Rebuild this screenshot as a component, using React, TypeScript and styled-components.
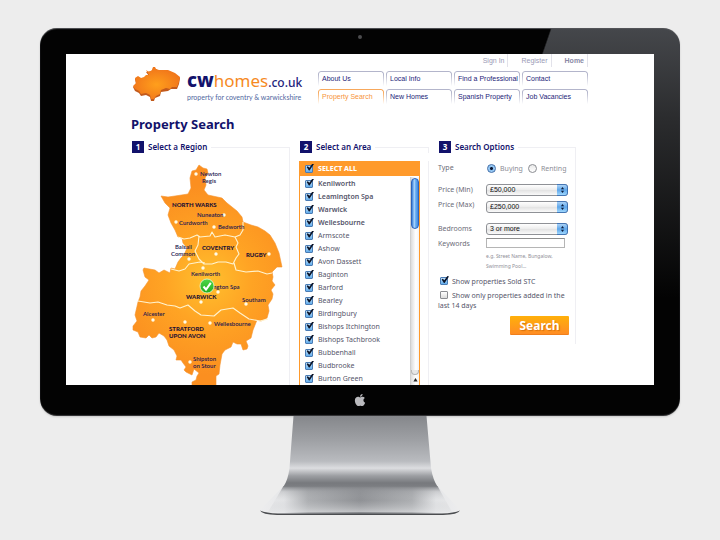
import React from 'react';
import styled, { createGlobalStyle } from 'styled-components';
import { FaApple } from 'react-icons/fa';

const lucida = `"Noto Sans", "Open Sans", sans-serif`;
const arial = `"Liberation Sans", Arial, sans-serif`;
const navy = '#12126b';
const orange = '#ff9a2b';

const GlobalStyle = createGlobalStyle`
  *, *::before, *::after { box-sizing: border-box; }
  body { margin: 0; background: #ededed; font-family: ${lucida}; }
  h1, h2, ul, p { margin: 0; padding: 0; }
  ul { list-style: none; }
`;

/* ---------- hardware ---------- */

const Stage = styled.main`
  min-height: 100vh;
  padding: 28px 40px 0;
  overflow: hidden;
  display: flex;
  flex-direction: column;
  align-items: center;
`;

const Monitor = styled.div`
  width: 100%;
  padding: 0 26px;
  border-radius: 17px;
  background:
    linear-gradient(109deg, #030303 66%, transparent 66.2%),
    linear-gradient(#45474b 0, #2b2c2e 90px, #030303 270px);
  box-shadow: inset 0 1px 1px #55565a, inset 0 -1px 1px #3a3a3c, 0 1px 2px rgba(0, 0, 0, 0.15);
`;

const TopBezel = styled.div`
  height: 26px;
  display: flex;
  justify-content: center;
  padding-top: 7px;
`;

const Camera = styled.span`
  width: 4px;
  height: 4px;
  border-radius: 50%;
  background: #4c4c4e;
`;

const Chin = styled.div`
  height: 31px;
  display: flex;
  justify-content: center;
  padding-top: 8px;
  color: #b9b9bd;
  font-size: 14px;
`;

const Screen = styled.div`
  aspect-ratio: 588 / 331;
  overflow: hidden;
  background: #fff;
`;

const StandArt = styled.svg`
  display: block;
  width: 204px;
  height: 104px;
`;

/* ---------- page ---------- */

const Site = styled.div`
  max-width: 458px;
  margin: 0 auto;
`;

const Header = styled.header`
  display: flex;
  justify-content: space-between;
  padding-right: 1px;
`;

const Brand = styled.a`
  display: flex;
  align-items: flex-start;
  padding: 12px 0 0 1px;
  text-decoration: none;
`;

const LogoArt = styled.svg`
  width: 50px;
  height: 36px;
  margin-right: 5px;
`;

const BrandText = styled.span`
  display: flex;
  flex-direction: column;
  padding-top: 4px;
`;

const Wordmark = styled.span`
  font: 400 19px/20px ${lucida};
  white-space: nowrap;
  color: #f68a1f;
`;

const Bold = styled.b`
  font-weight: 800;
  color: ${navy};
`;

const Homes = styled.span`
  font-size: 17px;
`;

const Suffix = styled.span`
  font-size: 12px;
  font-weight: 500;
  color: #24247c;
`;

const Tagline = styled.span`
  font: 400 7px/8px Lato, sans-serif;
  white-space: nowrap;
  color: #4f66a0;
`;

const HeaderNav = styled.div`
  width: 270px;
`;

const TopLinks = styled.nav`
  display: flex;
  justify-content: flex-end;
  height: 13px;
`;

const TopLink = styled.a<{ $strong?: boolean }>`
  padding: 3px 3px 0 13px;
  border-right: 1px solid #e2e2ea;
  font: ${p => (p.$strong ? 700 : 400)} 7px/8px ${arial};
  color: ${p => (p.$strong ? '#8a8aa6' : '#9a9ab6')};
  text-decoration: none;
`;

const Tabs = styled.nav`
  display: grid;
  grid-template-columns: repeat(4, minmax(0, 1fr));
  gap: 2px;
  margin-top: 4px;
`;

const Tab = styled.a<{ $active?: boolean }>`
  position: relative;
  height: 16px;
  padding-left: 4px;
  font: 400 7px/16px ${arial};
  white-space: nowrap;
  text-decoration: none;
  color: ${p => (p.$active ? '#f7953a' : '#1c1c78')};
  &::before {
    content: '';
    position: absolute;
    inset: 0;
    border: 1px solid ${p => (p.$active ? '#f7a85c' : '#b3b5cb')};
    border-bottom: 0;
    border-radius: 3px 3px 0 0;
    mask-image: linear-gradient(#000 20%, transparent 95%);
  }
`;

const Title = styled.h1`
  margin-top: 10px;
  font: 700 13px/18px ${lucida};
  color: ${navy};
`;

const Columns = styled.div`
  display: grid;
  grid-template-columns: minmax(0, 159fr) minmax(0, 130fr) minmax(0, 138fr);
  column-gap: 9px;
  align-items: start;
  margin-top: 8px;
  padding-right: 13px;
`;

const ColumnHead = styled.div`
  display: flex;
  align-items: center;
  height: 12px;
  padding-left: 1px;
  &::after {
    content: '';
    flex: 1;
    align-self: flex-end;
    height: 6px;
    margin-left: 4px;
    border: solid #efeff3;
    border-width: 1px 1px 0 0;
  }
`;

const Step = styled.span`
  width: 12px;
  height: 12px;
  margin-right: 4px;
  background: ${navy};
  color: #fff;
  font: 700 8px/12px ${lucida};
  text-align: center;
`;

const ColumnTitle = styled.h2`
  font: 600 8px/10px ${lucida};
  color: ${navy};
  white-space: nowrap;
`;

const ColumnBody = styled.div`
  border-right: 1px solid #efeff3;
`;

/* ---------- region map ---------- */

const MapArt = styled.svg`
  display: block;
  width: 100%;
`;

const Place = styled.text<{ $major?: boolean }>`
  font-family: Lato, sans-serif;
  font-size: 6px;
  font-weight: ${p => (p.$major ? 900 : 600)};
  fill: ${p => (p.$major ? '#1c0f33' : '#1d1850')};
`;

/* ---------- area list ---------- */

const AreaPanel = styled.div`
  margin: 8px 8px 0 0;
  border: solid ${orange};
  border-width: 0 1px;
`;

const Check = styled.input`
  appearance: none;
  position: relative;
  flex: none;
  width: 8px;
  height: 8px;
  margin: 0;
  border: 1px solid #8b8d92;
  border-radius: 1px;
  background: linear-gradient(#fff, #dcdcdc);
  &:checked {
    border-color: #4a7cb5;
    background: linear-gradient(#c3e2fb, #62adec);
  }
  &:checked::after {
    content: '';
    position: absolute;
    left: 0;
    top: -2px;
    width: 8px;
    height: 7px;
    background: #0b1428;
    clip-path: polygon(8% 50%, 22% 38%, 42% 62%, 80% 0, 100% 8%, 45% 100%, 36% 100%);
  }
`;

const SelectAll = styled.label`
  display: flex;
  align-items: center;
  gap: 5px;
  height: 15px;
  padding-left: 5px;
  background: ${orange};
  color: #fff;
  font: 800 7px/15px ${lucida};
`;

const AreaScroller = styled.div`
  display: flex;
  justify-content: space-between;
  padding-top: 1px;
`;

const AreaRow = styled.label<{ $town?: boolean }>`
  display: flex;
  align-items: center;
  gap: 5px;
  height: 13px;
  padding-left: 5px;
  font: ${p => (p.$town ? 600 : 400)} 7px/13px ${lucida};
  color: #55556a;
`;

const ScrollTrack = styled.div`
  display: flex;
  flex-direction: column;
  align-items: center;
  width: 9px;
  padding-top: 1px;
  border-left: 1px solid #cfcfcf;
  background: linear-gradient(90deg, #dcdcdc, #fff 60%, #f4f4f4);
`;

const ScrollThumb = styled.div`
  width: 8px;
  height: 51px;
  border: 1px solid #2c64bd;
  border-radius: 4px;
  background: linear-gradient(90deg, #3a7fd8, #a9d3fb 40%, #6bb0f3 60%, #3f86dd);
`;

const ScrollEnd = styled.div`
  width: 8px;
  height: 5px;
  margin-top: auto;
  border: 1px solid #b5b5b5;
  border-top: 0;
  border-radius: 0 0 4px 4px;
  background: #e6e6e6;
`;

const ScrollArrow = styled.svg`
  width: 5px;
  height: 10px;
`;

/* ---------- search options ---------- */

const Options = styled.form`
  display: flex;
  flex-direction: column;
  padding: 10px 7px 9px 0;
  font: 400 7px/10px ${lucida};
  color: #6c6c78;
`;

const Field = styled.div<{ $gap?: number }>`
  display: grid;
  grid-template-columns: 48px 1fr;
  align-items: start;
  margin-bottom: ${p => p.$gap ?? 0}px;
`;

const FieldName = styled.label<{ $raised?: boolean }>`
  line-height: ${p => (p.$raised ? 7 : 11)}px;
`;

const Radios = styled.div`
  display: flex;
  align-items: center;
  gap: 5px;
  height: 11px;
  padding-left: 1px;
`;

const RadioLabel = styled.label`
  display: flex;
  align-items: center;
  gap: 4px;
  color: #8d8d96;
  white-space: nowrap;
`;

const Radio = styled.input`
  appearance: none;
  width: 9px;
  height: 9px;
  margin: 0;
  border: 1px solid #8b8d92;
  border-radius: 50%;
  background: linear-gradient(#e9e9e9, #fff);
  &:checked {
    border-color: #3f6ca8;
    background: radial-gradient(circle, #0b1733 1px, #8cc2f2 2px, #b9ddfa);
  }
`;

const Picker = styled.span`
  position: relative;
  display: block;
`;

const PickerSelect = styled.select`
  appearance: none;
  display: block;
  width: 100%;
  height: 12px;
  padding: 0 12px 0 3px;
  border: 1px solid #8f9196;
  border-radius: 3px;
  background: linear-gradient(#fff, #ececec 50%, #e2e2e2 51%, #fafafa);
  font: 400 7px/10px ${arial};
  color: #111;
`;

const PickerArrows = styled.svg`
  position: absolute;
  top: 0;
  right: 0;
  width: 11px;
  height: 12px;
  pointer-events: none;
`;

const Keywords = styled.input`
  width: 79px;
  height: 10px;
  padding: 0 2px;
  border: 1px solid #b5b5b5;
  border-top-color: #8e8e8e;
  font: 400 7px/8px ${arial};
`;

const Hint = styled.p`
  grid-column: 2;
  padding-top: 2px;
  font: 400 5px/10px ${lucida};
  color: #8f8f98;
`;

const Toggle = styled.div`
  margin-top: 4px;
  text-indent: 2px;
  line-height: 10px;
  color: #55556a;
`;

const ToggleCheck = styled(Check)`
  margin-right: 4px;
  vertical-align: -1px;
`;

const SearchButton = styled.button`
  align-self: flex-end;
  width: 59px;
  height: 19px;
  margin-top: 5px;
  margin-right: -1px;
  padding: 0;
  border: 0;
  border-bottom: 1px solid #f07f1c;
  border-radius: 1px;
  background: linear-gradient(#ffb00a, #ff8d24);
  color: #fff;
  font: 700 12px/17px ${lucida};
  text-shadow: 1px 1px 1px rgba(190, 90, 0, 0.6);
`;

const COUNTY =
  'M199 165 L203 168 L207 169 L208 173 L205 178 L206 185 L204 190 L208 195 L222 198 L227 203 L237 211 L242 217 L243 222 L251 225 L258 227 L265 231 L270 235 L275 243 L279 253 L282 267 L277 267 L272 272 L273 277 L272 281 L275 285 L271 290 L273 294 L272 299 L268 305 L269 311 L267 318 L261 321 L257 320 L253 330 L251 338 L246 341 L248 346 L247 349 L243 350 L241 344 L237 344 L233 342 L231 347 L225 350 L222 354 L220 365 L219 374 L216 376 L216 387 L192 387 L192 382 L196 380 L197 376 L199 373 L194 369 L192 375 L186 372 L184 370 L186 367 L183 363 L181 360 L176 360 L177 356 L174 350 L169 346 L167 340 L164 336 L159 333 L156 337 L152 338 L149 335 L146 338 L140 337 L138 332 L133 330 L133 326 L137 321 L135 315 L138 302 L140 297 L141 291 L145 286 L149 280 L145 277 L143 270 L144 268 L155 270 L159 273 L164 270 L170 273 L171 268 L175 269 L178 262 L181 258 L184 255 L187 248 L183 243 L182 238 L178 237 L175 230 L171 223 L168 215 L170 208 L165 203 L161 196 L168 197 L175 196 L188 194 L191 188 L190 178 L192 171 L196 170 Z';

const BORDERS = [
  'M178 237 L184 239 L190 238 L197 235 L200 237 L210 236 L212 232 L215 237 L225 235 L235 237 L240 235 L243 230 L243 222',
  'M199 236 L198 245 L195 251 L199 259 L204 264 L212 264 L218 262 L226 262 L233 264 L236 258 L239 254 L236 247 L238 243 L235 237',
  'M171 269 L179 271 L185 269 L189 264 L200 262 L205 263',
  'M234 263 L236 270 L246 272 L258 271 L267 274 L272 273',
  'M138 301 L150 303 L158 302 L167 305 L175 306 L180 308 L188 305 L195 311 L201 315 L214 316 L221 310 L233 308 L240 313 L249 319 L260 321 L268 319',
];

const DOTS = [
  [196, 174], [224, 215], [176, 222], [214, 227], [216, 254], [269, 254], [189, 259],
  [203, 268], [218, 292], [201, 302], [246, 304], [153, 320], [185, 322], [210, 323], [190, 362],
];

const PLACES: [number, number, string, boolean?][] = [
  [200, 176, 'Newton'], [202, 183, 'Regis'],
  [172, 207, 'NORTH WARKS', true],
  [197, 217, 'Nuneaton'], [179, 225, 'Curdworth'], [218, 229, 'Bedworth'],
  [175, 249, 'Balsall'], [171, 256, 'Common'],
  [202, 250, 'COVENTRY', true], [246, 257, 'RUGBY', true],
  [191, 276, 'Kenilworth'], [213, 289, 'ngton Spa'],
  [186, 299, 'WARWICK', true], [242, 302, 'Southam'],
  [143, 316, 'Alcester'], [214, 326, 'Wellesbourne'],
  [169, 331, 'STRATFORD', true], [169, 338, 'UPON AVON', true],
  [193, 361, 'Shipston'], [193, 368, 'on Stour'],
];

const AREAS = [
  'Kenilworth', 'Leamington Spa', 'Warwick', 'Wellesbourne', 'Armscote', 'Ashow',
  'Avon Dassett', 'Baginton', 'Barford', 'Bearley', 'Birdingbury', 'Bishops Itchington',
  'Bishops Tachbrook', 'Bubbenhall', 'Budbrooke', 'Burton Green',
];

const TABS = [
  'About Us', 'Local Info', 'Find a Professional', 'Contact',
  'Property Search', 'New Homes', 'Spanish Property', 'Job Vacancies',
];

const Logo = () => (
  <LogoArt viewBox="0 0 50 36" aria-hidden="true">
    <defs>
      <radialGradient id="logoFill" cx="50%" cy="55%" r="55%">
        <stop offset="0" stopColor="#ff9f1c" />
        <stop offset="1" stopColor="#f0741a" />
      </radialGradient>
    </defs>
    <path
      transform="translate(0 1)"
      fill="#c25a1c"
      d="M14 5 L20 4 L21 1 L24 2 L27 4 L36 4 L43 7 L48 11 L47 17 L45 22 L39 22 L36 24 L29 25 L28 29 L23 31 L22 34 L19 34 L18 30 L14 28 L9 29 L7 26 L3 24 L1 20 L4 17 L3 12 L6 10 L11 12 L14 9 L17 9 Z"
    />
    <path
      fill="url(#logoFill)"
      d="M14 4 L17 6 L20 4 L21 1 L23 1 L24 3 L27 4 L36 4 L43 7 L48 11 L47 16 L45 21 L40 21 L38 23 L34 22 L29 24 L28 28 L24 30 L22 33 L19 33 L18 29 L14 27 L9 28 L7 25 L3 23 L1 20 L4 17 L3 12 L6 10 L9 12 L12 11 L14 9 L17 9 Z"
    />
  </LogoArt>
);

const RegionMap = () => (
  <MapArt viewBox="131 153 158 233" role="img" aria-label="Map of regions">
    <defs>
      <radialGradient id="countyFill" gradientUnits="userSpaceOnUse" cx="208" cy="280" r="95">
        <stop offset="0" stopColor="#ffc02e" />
        <stop offset="0.45" stopColor="#ffa424" />
        <stop offset="1" stopColor="#fb8f20" />
      </radialGradient>
      <linearGradient id="pin" x1="0" y1="0" x2="0" y2="1">
        <stop offset="0" stopColor="#4fd64a" />
        <stop offset="1" stopColor="#1fae1c" />
      </linearGradient>
    </defs>
    <path d={COUNTY} fill="url(#countyFill)" stroke="#f5922c" strokeWidth="0.6" strokeLinejoin="round" />
    {BORDERS.map(d => (
      <path key={d} d={d} fill="none" stroke="#fff3cf" strokeWidth="1.1" strokeLinejoin="round" />
    ))}
    {DOTS.map(([x, y]) => (
      <circle key={`${x}-${y}`} cx={x} cy={y} r="1.7" fill="#fffbe8" />
    ))}
    {PLACES.map(([x, y, name, major]) => (
      <Place key={name} x={x} y={y} $major={major}>{name}</Place>
    ))}
    <circle cx="207" cy="286" r="7" fill="url(#pin)" stroke="#e9f7d8" strokeWidth="0.8" />
    <path d="M203.5 286.5 L206 289.5 L210.8 282.8" fill="none" stroke="#fff" strokeWidth="2" />
  </MapArt>
);

const Dropdown = ({ id, value }: { id: string; value: string }) => (
  <Picker>
    <PickerSelect id={id} defaultValue={value}>
      <option>{value}</option>
    </PickerSelect>
    <PickerArrows viewBox="0 0 11 12" aria-hidden="true">
      <defs>
        <linearGradient id={`${id}-cap`} x1="0" y1="0" x2="0" y2="1">
          <stop offset="0" stopColor="#b4d8f8" />
          <stop offset="0.5" stopColor="#5ea6ea" />
          <stop offset="1" stopColor="#a5dcff" />
        </linearGradient>
      </defs>
      <path d="M0 0.5 H8 Q10.5 0.5 10.5 3 V9 Q10.5 11.5 8 11.5 H0 Z" fill={`url(#${id}-cap)`} />
      <path d="M0 0.5 H8 Q10.5 0.5 10.5 3 V9 Q10.5 11.5 8 11.5 H0" fill="none" stroke="#2f66ae" strokeWidth="0.8" />
      <path d="M5.5 3 L7.1 5.2 H3.9 Z M5.5 9 L7.1 6.8 H3.9 Z" fill="#0c1c3c" />
    </PickerArrows>
  </Picker>
);

const Stand = () => (
  <StandArt viewBox="258 416 204 104" aria-hidden="true">
    <defs>
      <linearGradient id="neck" x1="0" y1="0" x2="0" y2="1">
        <stop offset="0" stopColor="#85878b" />
        <stop offset="0.35" stopColor="#9fa1a5" />
        <stop offset="0.64" stopColor="#b9bbbf" />
        <stop offset="0.74" stopColor="#dcdde0" />
        <stop offset="0.85" stopColor="#9c9ea2" />
        <stop offset="0.95" stopColor="#77797d" />
        <stop offset="1" stopColor="#7c7e82" />
      </linearGradient>
      <linearGradient id="foot" x1="0" y1="0" x2="1" y2="0">
        <stop offset="0" stopColor="#ededee" />
        <stop offset="0.12" stopColor="#e6e7e9" />
        <stop offset="0.24" stopColor="#abadb0" />
        <stop offset="0.5" stopColor="#8a8c90" />
        <stop offset="0.76" stopColor="#abadb0" />
        <stop offset="0.88" stopColor="#e6e7e9" />
        <stop offset="1" stopColor="#ededee" />
      </linearGradient>
      <linearGradient id="footShade" x1="0" y1="0" x2="0" y2="1">
        <stop offset="0" stopColor="#7c7e82" />
        <stop offset="0.22" stopColor="#9b9da1" stopOpacity="0.35" />
        <stop offset="0.55" stopColor="#c0c2c5" stopOpacity="0.1" />
        <stop offset="1" stopColor="#e4e5e7" stopOpacity="0.6" />
      </linearGradient>
    </defs>
    <path d="M283.5 486 L260 510 Q264 514 278 514 H442 Q456 514 460 510 L437.5 486 Z" fill="url(#foot)" />
    <path d="M283.5 486 L268 512 H452 L437.5 486 Z" fill="url(#footShade)" />
    <path d="M260 510.5 Q266 513 278 513.5 H442 Q454 513 460 510.5 Q458 514.5 443 515 H277 Q262 514.5 260 510.5 Z" fill="#4b4d50" />
    <path d="M293.5 416 H426.5 L431 468 Q433 480 437.5 486.5 H283.5 Q288 480 289.5 468 Z" fill="url(#neck)" />
  </StandArt>
);

export default function App() {
  return (
    <>
      <GlobalStyle />
      <Stage>
        <Monitor>
          <TopBezel><Camera /></TopBezel>
          <Screen>
            <Site>
              <Header>
                <Brand href="#home" aria-label="cwhomes.co.uk">
                  <Logo />
                  <BrandText>
                    <Wordmark><Bold>cw</Bold><Homes>homes</Homes><Suffix>.co.uk</Suffix></Wordmark>
                    <Tagline>property for coventry &amp; warwickshire</Tagline>
                  </BrandText>
                </Brand>
                <HeaderNav>
                  <TopLinks>
                    <TopLink href="#signin">Sign In</TopLink>
                    <TopLink href="#register">Register</TopLink>
                    <TopLink href="#home" $strong>Home</TopLink>
                  </TopLinks>
                  <Tabs>
                    {TABS.map(t => (
                      <Tab key={t} href="#tab" $active={t === 'Property Search'}>{t}</Tab>
                    ))}
                  </Tabs>
                </HeaderNav>
              </Header>

              <Title>Property Search</Title>

              <Columns>
                <section>
                  <ColumnHead><Step>1</Step><ColumnTitle>Select a Region</ColumnTitle></ColumnHead>
                  <ColumnBody><RegionMap /></ColumnBody>
                </section>

                <section>
                  <ColumnHead><Step>2</Step><ColumnTitle>Select an Area</ColumnTitle></ColumnHead>
                  <ColumnBody>
                    <AreaPanel>
                      <SelectAll><Check type="checkbox" defaultChecked />SELECT ALL</SelectAll>
                      <AreaScroller>
                        <ul>
                          {AREAS.map((a, i) => (
                            <li key={a}>
                              <AreaRow $town={i < 4}><Check type="checkbox" defaultChecked />{a}</AreaRow>
                            </li>
                          ))}
                        </ul>
                        <ScrollTrack>
                          <ScrollThumb />
                          <ScrollEnd />
                          <ScrollArrow viewBox="0 0 5 10"><path d="M2.5 3 L4.6 6.5 H0.4 Z" fill="#222" /></ScrollArrow>
                        </ScrollTrack>
                      </AreaScroller>
                    </AreaPanel>
                  </ColumnBody>
                </section>

                <section>
                  <ColumnHead><Step>3</Step><ColumnTitle>Search Options</ColumnTitle></ColumnHead>
                  <ColumnBody>
                    <Options onSubmit={e => e.preventDefault()}>
                      <Field $gap={10}>
                        <span>Type</span>
                        <Radios>
                          <RadioLabel><Radio type="radio" name="type" defaultChecked />Buying</RadioLabel>
                          <RadioLabel><Radio type="radio" name="type" />Renting</RadioLabel>
                        </Radios>
                      </Field>
                      <Field $gap={5}>
                        <FieldName htmlFor="min">Price (Min)</FieldName>
                        <Dropdown id="min" value="£50,000" />
                      </Field>
                      <Field $gap={10}>
                        <FieldName htmlFor="max" $raised>Price (Max)</FieldName>
                        <Dropdown id="max" value="£250,000" />
                      </Field>
                      <Field $gap={3}>
                        <FieldName htmlFor="beds">Bedrooms</FieldName>
                        <Dropdown id="beds" value="3 or more" />
                      </Field>
                      <Field $gap={2}>
                        <FieldName htmlFor="keywords">Keywords</FieldName>
                        <Keywords id="keywords" type="text" />
                        <Hint>e.g. Street Name, Bungalow, Swimming Pool...</Hint>
                      </Field>
                      <Toggle>
                        <ToggleCheck id="stc" type="checkbox" defaultChecked />
                        <label htmlFor="stc">Show properties Sold STC</label>
                      </Toggle>
                      <Toggle>
                        <ToggleCheck id="recent" type="checkbox" />
                        <label htmlFor="recent">Show only properties added in the last 14 days</label>
                      </Toggle>
                      <SearchButton type="submit">Search</SearchButton>
                    </Options>
                  </ColumnBody>
                </section>
              </Columns>
            </Site>
          </Screen>
          <Chin><FaApple /></Chin>
        </Monitor>
        <Stand />
      </Stage>
    </>
  );
}
